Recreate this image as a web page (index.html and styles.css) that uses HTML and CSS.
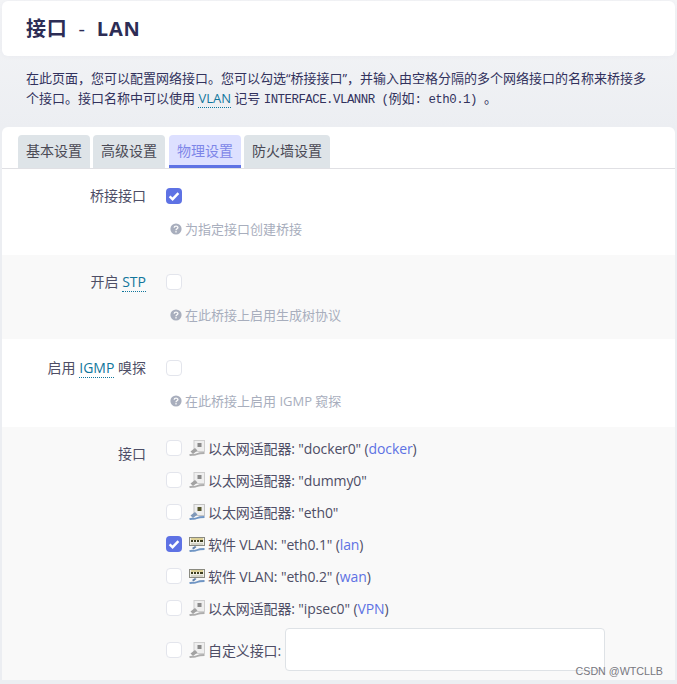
FILE: index.html
```html
<!DOCTYPE html>
<html lang="zh-CN">

<head>
    <meta charset="UTF-8">
    <title>接口 - LAN</title>
    <link rel="stylesheet" href="styles.css">
</head>

<body>
    <svg class="defs" width="0" height="0" aria-hidden="true">
        <symbol id="icon-check" viewBox="0 0 16 16">
            <path d="M3.6 8.4 6.6 11.2 12.4 5.2" fill="none" stroke="#fff" stroke-width="2.4"/>
        </symbol>
        <symbol id="icon-help" viewBox="0 0 12 12">
            <circle cx="6" cy="6" r="5.6" fill="#a8aebd"/>
            <path d="M4.2 4.7C4.2 2.6 7.9 2.6 7.9 4.6 7.9 5.8 6 5.8 6 7.2" fill="none" stroke="#f9f9f9" stroke-width="1.4"/>
            <rect x="5.3" y="8.1" width="1.4" height="1.4" fill="#f9f9f9"/>
        </symbol>
        <symbol id="icon-eth" viewBox="0 0 16 16">
            <rect x="5" y="0.5" width="10.500" height="11" fill="#efefef" stroke="#cfcfcf"/>
            <rect x="8.500" y="3" width="4" height="4" fill="#8a8a8a"/>
            <path d="M6 8 1.500 11.500 4 14 8.500 10.500Z" fill="#a2a2a2"/>
            <path d="M0.500 15.300C3 14 5 15.500 7.500 14.300S12 13 15.500 13" fill="none" stroke="#adadad" stroke-width="1.800"/>
        </symbol>
        <symbol id="icon-eth-up" viewBox="0 0 16 16">
            <rect x="5" y="0.500" width="10.500" height="11" fill="#efefef" stroke="#c4c4c4"/>
            <rect x="8.500" y="3" width="4" height="4" fill="#55552a"/>
            <path d="M6 8 1.500 11.500 4 14 8.500 10.500Z" fill="#7f98b8"/>
            <path d="M0.500 15.300C3 14 5 15.500 7.500 14.300S12 13 15.500 13" fill="none" stroke="#6f95c4" stroke-width="1.800"/>
        </symbol>
        <symbol id="icon-vlan" viewBox="0 0 16 16">
            <rect x="0.500" y="1.500" width="15" height="8" fill="#f0efe4" stroke="#8a8a80"/>
            <path d="M2 4h2v2H2zM5 4h2v2H5zM8 4h2v2H8zM11 4h3v2h-3z" fill="#3e3e20"/>
            <path d="M2 3h12" stroke="#c9b24a"/>
            <path d="M2 8h12" stroke="#b5b5aa"/>
            <path d="M6 10 3 12 4.500 13.500 7.500 11Z" fill="#5f7fa8"/>
            <path d="M0.500 15.300C3 14 5 15.500 7.500 14.300S12 13 15.500 13" fill="none" stroke="#6f95c4" stroke-width="1.800"/>
        </symbol>
    </svg>

    <!-- Title -->
    <header class="title-card">
        <h1>接口 <span class="dash">-</span> LAN</h1>
    </header>

    <!-- Description -->
    <p class="intro">在此页面，您可以配置网络接口。您可以勾选“桥接接口”，并输入由空格分隔的多个网络接口的名称来桥接多个接口。接口名称中可以使用 <abbr>VLAN</abbr> 记号 <code>INTERFACE.VLANNR (<span class="code-cjk">例如</span>: eth0.1) </code>。</p>

    <main class="panel">
        <!-- Tabs -->
        <ul class="tabs">
            <li class="tab">基本设置</li>
            <li class="tab">高级设置</li>
            <li class="tab tab-active">物理设置</li>
            <li class="tab">防火墙设置</li>
        </ul>

        <!-- Bridge -->
        <section class="row row-bridge">
            <div class="row-label">桥接接口</div>
            <div class="row-field">
                <span class="box box-on"><svg width="16" height="16"><use href="#icon-check"/></svg></span>
                <div class="hint"><svg width="12" height="12"><use href="#icon-help"/></svg>为指定接口创建桥接</div>
            </div>
        </section>

        <!-- STP -->
        <section class="row row-stp row-alt">
            <div class="row-label">开启 <abbr>STP</abbr></div>
            <div class="row-field">
                <span class="box"></span>
                <div class="hint"><svg width="12" height="12"><use href="#icon-help"/></svg>在此桥接上启用生成树协议</div>
            </div>
        </section>

        <!-- IGMP -->
        <section class="row row-igmp">
            <div class="row-label">启用 <abbr>IGMP</abbr> 嗅探</div>
            <div class="row-field">
                <span class="box"></span>
                <div class="hint"><svg width="12" height="12"><use href="#icon-help"/></svg>在此桥接上启用 IGMP 窥探</div>
            </div>
        </section>

        <!-- Interfaces -->
        <section class="row row-ifaces row-alt">
            <div class="row-label">接口</div>
            <div class="row-field iface-list">
                <div class="iface"><span class="box"></span><svg width="16" height="16"><use href="#icon-eth"/></svg><span>以太网适配器: "docker0" (<a class="net">docker</a>)</span></div>
                <div class="iface"><span class="box"></span><svg width="16" height="16"><use href="#icon-eth"/></svg><span>以太网适配器: "dummy0"</span></div>
                <div class="iface"><span class="box"></span><svg width="16" height="16"><use href="#icon-eth-up"/></svg><span>以太网适配器: "eth0"</span></div>
                <div class="iface"><span class="box box-on"><svg width="16" height="16"><use href="#icon-check"/></svg></span><svg width="16" height="16"><use href="#icon-vlan"/></svg><span>软件 VLAN: "eth0.1" (<a class="net">lan</a>)</span></div>
                <div class="iface"><span class="box"></span><svg width="16" height="16"><use href="#icon-vlan"/></svg><span>软件 VLAN: "eth0.2" (<a class="net">wan</a>)</span></div>
                <div class="iface"><span class="box"></span><svg width="16" height="16"><use href="#icon-eth"/></svg><span>以太网适配器: "ipsec0" (<a class="net">VPN</a>)</span></div>
                <div class="iface iface-custom"><span class="box"></span><svg width="16" height="16"><use href="#icon-eth"/></svg><span>自定义接口:</span><input class="custom-input" type="text"></div>
            </div>
        </section>
    </main>

    <!-- Watermark -->
    <div class="watermark">CSDN @WTCLLB</div>
</body>

</html>
```

FILE: styles.css
```css
html {
    height: 100%;
}

body {
    margin: 0;
    height: 684px;
    overflow: hidden;
    padding: 1px 2px 0;
    box-sizing: border-box;
    background: linear-gradient(#f4f5f7, #eceef2 128px);
    color: #32325d;
    font-family: "Open Sans", "Noto Sans CJK SC", sans-serif;
    font-size: 14px;
    position: relative;
}

.defs {
    position: absolute;
}

/* Title */
.title-card {
    background-color: #fff;
    border-radius: 6px;
    height: 55px;
    padding-left: 24px;
    box-sizing: border-box;
    box-shadow: 0 0 6px rgba(50, 50, 93, 0.04);
}

h1 {
    margin: 0;
    font-size: 20px;
    line-height: 55px;
    font-weight: 700;
    letter-spacing: 0.8px;
    word-spacing: 5px;
    color: #2d2d55;
}

.dash {
    font-weight: 400;
}

/* Description */
.intro {
    margin: 0;
    padding: 13px 24px 0;
    height: 71px;
    box-sizing: border-box;
    font-size: 13px;
    line-height: 19.5px;
    color: #32325d;
}

abbr {
    color: #11769c;
    border-bottom: 1px dotted #11769c;
}

code {
    font-family: "Liberation Mono", "Noto Sans CJK SC", monospace;
    font-size: 12.4px;
    letter-spacing: -0.5px;
}

.code-cjk {
    font-size: 13px;
    letter-spacing: 0;
}

/* Panel */
.panel {
    background-color: #fff;
    border-radius: 6px 6px 0 0;
}

.tabs {
    display: flex;
    gap: 3px;
    list-style: none;
    margin: 0;
    padding: 8px 0 0 16px;
    border-bottom: 1px solid #e0e0e4;
}

.tab {
    background-color: #dee4e8;
    border-radius: 4px 4px 0 0;
    height: 33px;
    line-height: 31px;
    padding: 0 8px;
    box-sizing: border-box;
    color: #4a4a55;
}

.tab-active {
    background-color: #dde0ff;
    border-bottom: 3px solid #5e72e4;
    color: #7d86e8;
    margin-left: 1px;
}

/* Rows */
.row {
    display: flex;
}

.row-alt {
    background-color: #f9f9f9;
}

.row-bridge {
    height: 86px;
    padding-top: 19px;
    box-sizing: border-box;
}

.row-stp {
    height: 84px;
    padding-top: 19px;
    box-sizing: border-box;
}

.row-igmp {
    height: 88px;
    padding-top: 21px;
    box-sizing: border-box;
}

.row-ifaces {
    height: 253px;
    padding-top: 5px;
    box-sizing: border-box;
}

.row-label {
    width: 144px;
    text-align: right;
    color: #4e4e66;
    line-height: 16px;
    flex-shrink: 0;
}

.row-ifaces .row-label {
    padding-top: 14px;
}

.row-field {
    margin-left: 20px;
}

.box {
    display: block;
    width: 16px;
    height: 16px;
    box-sizing: border-box;
    border: 1px solid #e3e5ec;
    border-radius: 4px;
    background-color: #fff;
    flex-shrink: 0;
}

.box-on {
    background-color: #5e72e4;
    border: none;
}

.box svg {
    display: block;
}

.hint {
    display: flex;
    align-items: center;
    gap: 3px;
    margin: 15px 0 0 4px;
    font-size: 13px;
    line-height: 20px;
    color: #a8aebd;
}

/* Interface list */
.iface {
    display: flex;
    align-items: center;
    height: 32px;
    letter-spacing: -0.12px;
    color: #4e4e66;
}

.iface > svg {
    margin: 0 3px 0 7px;
    flex-shrink: 0;
}

.net {
    color: #5e72e4;
}

.iface-custom {
    height: 43px;
    margin-top: 4px;
}

.custom-input {
    width: 320px;
    height: 43px;
    margin-left: 4px;
    box-sizing: border-box;
    border: 1px solid #dee2e6;
    border-radius: 4px;
    background-color: #fff;
}

/* Watermark */
.watermark {
    position: absolute;
    right: 14px;
    bottom: 7px;
    font-family: "Liberation Sans", sans-serif;
    font-size: 10.7px;
    color: #77777f;
}
```
